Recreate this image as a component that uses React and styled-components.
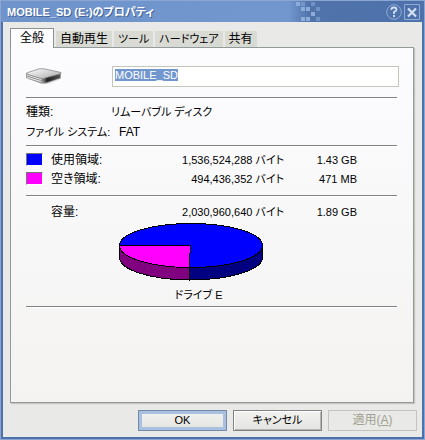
import React, { useEffect, useRef } from 'react';
import styled, { createGlobalStyle } from 'styled-components';

const GlobalStyle = createGlobalStyle`
  * {
    box-sizing: border-box;
  }

  body {
    margin: 0;
    color: #000;
    font-family: 'Liberation Sans', 'Noto Sans CJK JP', sans-serif;
    font-size: 12px;
    line-height: 16px;
    font-feature-settings: 'palt';
  }

  button,
  input {
    font: inherit;
    font-feature-settings: inherit;
  }
`;

const Dialog = styled.main`
  display: flex;
  flex-direction: column;
  min-height: 100vh;
  padding: 0 2px 2px;
  border: 1px solid #8ba6d3;
  background: #4d71ab;
`;

const TitleBar = styled.header`
  display: flex;
  align-items: center;
  height: 21px;
  margin: 0 -2px;
  padding: 0 4px 0 6px;
  background: linear-gradient(90deg, #6f93cb, #7296ce 68%, #5073aa 73%, #4d71ab);
`;

const Title = styled.h1`
  margin: 0;
  color: #fff;
  font-size: 11px;
  font-weight: 700;
  line-height: 20px;
  text-shadow: 1px 1px 0 #42639b;
  white-space: nowrap;
`;

const Mosaic = styled.svg`
  flex: none;
  margin-left: auto;
  margin-right: 64px;
`;

const TitleButton = styled.button`
  flex: none;
  display: flex;
  width: 16px;
  height: 16px;
  margin-left: 2px;
  padding: 0;
  border: 0;
  background: none;
`;

const Body = styled.div`
  flex: 1;
  display: flex;
  flex-direction: column;
  padding: 6px 5px 6px 7px;
  background: #e9e9e7;
`;

const TabList = styled.div`
  display: flex;
  align-items: flex-end;
  gap: 2px;
`;

const Tab = styled.button`
  height: ${(props) => (props.$active ? '20px' : '16px')};
  margin-bottom: ${(props) => (props.$active ? '-1px' : '0')};
  padding: 0 ${(props) => (props.$active ? 9 : props.$kana ? 4 : 4)}px;
  border: solid #8d9191;
  border-width: ${(props) => (props.$active ? '1px 1px 0' : '0')};
  border-radius: 1px 1px 0 0;
  background: ${(props) => (props.$active ? '#fcfcff' : '#d9dad4')};
  font-size: ${(props) => (props.$kana ? 11 : 12)}px;
  line-height: 15px;
  white-space: nowrap;
  z-index: 1;
`;

const Panel = styled.section`
  flex: 1;
  display: flex;
  flex-direction: column;
  margin-right: 3px;
  padding: 18px 14px 0 15px;
  border: 1px solid #919b9c;
  background: linear-gradient(#fcfcff, #f4f3f1);
  box-shadow: 1px 1px 1px #c5c5bb;
`;

const NameRow = styled.div`
  display: grid;
  grid-template-columns: 86px 1fr;
  align-items: center;
  height: 21px;
`;

const NameInput = styled.input`
  width: 100%;
  height: 21px;
  padding: 0 2px 3px;
  border: 1px solid #c5c6ba;
  outline: 0;
  background: #fff;
  color: #000;
  font-size: 11px;

  &::selection {
    background: #7296ce;
    color: #fff;
  }
`;

const Rule = styled.hr`
  width: calc(100% - 2px);
  height: 2px;
  margin: ${(props) => props.$top}px 0 ${(props) => props.$bottom}px;
  border: 0;
  border-top: 1px solid #828282;
  background: #fff;
`;

const Facts = styled.dl`
  display: flex;
  flex-direction: column;
  gap: 4px;
  margin: 0;
`;

const Fact = styled.div`
  display: flex;

  dt {
    width: ${(props) => props.$labelWidth}px;
    font-size: ${(props) => (props.$kana ? 11 : 12)}px;
    white-space: nowrap;
  }

  dd {
    margin: 0;
    font-size: ${(props) => (props.$kana ? 12 : 11)}px;
  }
`;

const Usage = styled.table`
  width: 331px;
  max-width: 100%;
  border-collapse: collapse;
  table-layout: fixed;

  th,
  td {
    height: 19px;
    padding: 0;
    font-weight: 400;
    white-space: nowrap;
  }

  th {
    width: 110px;
    text-align: left;
  }

  td {
    font-size: 11px;
    text-align: right;
  }

  td:last-child {
    width: 73px;
  }
`;

const Label = styled.span`
  display: flex;
  align-items: center;
  gap: 8px;
  padding-left: ${(props) => (props.$indent ? 25 : 0)}px;
`;

const Swatch = styled.span`
  width: 17px;
  height: 13px;
  border: 1px solid;
  border-color: #777 #fff #fff #777;
  background: ${(props) => props.$color};
`;

const Chart = styled.figure`
  display: flex;
  flex-direction: column;
  align-items: center;
  margin: 2px 0 0;
  padding-right: 42px;

  figcaption {
    margin: 5px 0 0 14px;
    font-size: 11px;
  }
`;

const Actions = styled.footer`
  display: flex;
  justify-content: flex-end;
  gap: 6px;
  margin-top: 7px;
`;

const Button = styled.button`
  width: 89px;
  height: 21px;
  padding: 0;
  border: 1px solid ${(props) => (props.$primary ? '#7389a8' : '#838383')};
  background: linear-gradient(#f2f2f0, #e4e4e1);
  box-shadow: ${(props) => (props.$primary ? 'inset 0 0 0 3px #a9c1df' : 'inset 1px 1px #fff, inset -1px -1px #b5b5b2')};
  font-size: ${(props) => (props.disabled ? 12 : 11)}px;
  line-height: 17px;

  &:disabled {
    border-color: #c3c4bf;
    background: #e9e9e7;
    box-shadow: none;
    color: #a1a192;
  }
`;

const tabs = [
  { name: '全般' },
  { name: '自動再生' },
  { name: 'ツール', kana: true },
  { name: 'ハードウェア', kana: true },
  { name: '共有' },
];

const TitleMosaic = () => (
  <Mosaic width="25" height="21" viewBox="0 0 25 21" fill="#8dabdb" aria-hidden="true">
    <path d="M1 1h4v4H1ZM6 6h4v4H6ZM11 6h4v4h-4ZM16 11h4v4h-4ZM6 16h4v4H6ZM11 16h4v4h-4Z" />
    <path d="M6 1h4v4H6ZM16 1h4v4h-4ZM21 6h4v4h-4ZM21 16h4v4h-4Z" opacity="0.55" />
  </Mosaic>
);

const HelpIcon = () => (
  <svg width="16" height="16" viewBox="0 0 16 16" fill="none" aria-hidden="true">
    <circle cx="8" cy="8" r="7.3" stroke="#91abd6" />
    <path d="M5.5 6V4.5Q6 3.5 8 3.5q2.500 0 2.500 2Q10.500 7 8 8v2M8 11v2" stroke="#d5e0f2" strokeWidth="1.800" />
  </svg>
);

const CloseIcon = () => (
  <svg width="16" height="16" viewBox="0 0 16 16" fill="none" aria-hidden="true">
    <path d="M.5.5h15v15H.5Z" stroke="#91abd6" />
    <path d="m4 4.500 8 8m0-8-8 8" stroke="#d5e0f2" strokeWidth="2.200" />
  </svg>
);

const DriveIcon = () => (
  <svg width="37" height="17" viewBox="0 0 37 17" aria-hidden="true">
    <defs>
      <linearGradient id="drive-top" x1="0" y1="0" x2="1" y2="1">
        <stop offset="0" stopColor="#fff" />
        <stop offset="1" stopColor="#a8a8a8" />
      </linearGradient>
      <linearGradient id="drive-front" x1="0" y1="0" x2="1" y2="0">
        <stop offset="0" stopColor="#999" />
        <stop offset="0.3" stopColor="#222" />
        <stop offset="1" stopColor="#555" />
      </linearGradient>
    </defs>
    <path d="M2 11 17 16h5l13-5v-2L18 13 3 9Z" fill="#ccc" opacity="0.7" />
    <path d="M0 5v5l15 5.500h5L35 10V5L18 9Z" fill="#9a9a9a" />
    <path d="M1 6.500 15 11v3L1 9.500Z" fill="#eee" />
    <path d="M1 8 15 12.500" stroke="#888" />
    <path d="M16 10.500 34 6v4l-14 4.500h-4Z" fill="url(#drive-front)" />
    <path d="M.5 5 13 .8h5L35 4.500v1L17 10.500h-2L.5 6Z" fill="url(#drive-top)" stroke="#8a8a8a" strokeWidth="0.8" />
  </svg>
);

const PieChart = () => (
  <svg
    width="145"
    height="59"
    viewBox="0 0 145 59"
    role="img"
    aria-label="使用領域と空き領域"
    stroke="#000"
    shapeRendering="crispEdges"
  >
    <path d="M.5 22.500v12a71.500 22.500 0 0 0 70 22.500V22.500Z" fill="#800080" />
    <path d="M70.500 57a73 22.500 0 0 0 73-22.500v-12h-73Z" fill="#000080" />
    <ellipse cx="72" cy="22.500" rx="71.500" ry="22" fill="#00f" />
    <path d="M.5 22.500h71L70 44.500A71.500 22 0 0 1 .5 22.500Z" fill="#f0f" />
  </svg>
);

const App = () => {
  const nameRef = useRef(null);

  useEffect(() => {
    nameRef.current.focus();
    nameRef.current.select();
  }, []);

  return (
    <Dialog>
      <GlobalStyle />
      <TitleBar>
        <Title>MOBILE_SD (E:)のプロパティ</Title>
        <TitleMosaic />
        <TitleButton aria-label="ヘルプ">
          <HelpIcon />
        </TitleButton>
        <TitleButton aria-label="閉じる">
          <CloseIcon />
        </TitleButton>
      </TitleBar>
      <Body>
        <TabList role="tablist">
          {tabs.map((tab, i) => (
            <Tab key={tab.name} role="tab" aria-selected={i === 0} $active={i === 0} $kana={tab.kana}>
              {tab.name}
            </Tab>
          ))}
        </TabList>
        <Panel role="tabpanel">
          <NameRow>
            <DriveIcon />
            <NameInput ref={nameRef} aria-label="ボリューム名" defaultValue="MOBILE_SD" />
          </NameRow>
          <Rule $top={10} $bottom={5} />
          <Facts>
            <Fact $labelWidth={85}>
              <dt>種類:</dt>
              <dd>リムーバブル ディスク</dd>
            </Fact>
            <Fact $labelWidth={93} $kana>
              <dt>ファイル システム:</dt>
              <dd>FAT</dd>
            </Fact>
          </Facts>
          <Rule $top={5} $bottom={3} />
          <Usage>
            <tbody>
              <tr>
                <th scope="row">
                  <Label>
                    <Swatch $color="#00f" />
                    使用領域:
                  </Label>
                </th>
                <td>1,536,524,288 バイト</td>
                <td>1.43 GB</td>
              </tr>
              <tr>
                <th scope="row">
                  <Label>
                    <Swatch $color="#f0f" />
                    空き領域:
                  </Label>
                </th>
                <td>494,436,352 バイト</td>
                <td>471 MB</td>
              </tr>
            </tbody>
          </Usage>
          <Rule $top={7} $bottom={5} />
          <Usage>
            <tbody>
              <tr>
                <th scope="row">
                  <Label $indent>容量:</Label>
                </th>
                <td>2,030,960,640 バイト</td>
                <td>1.89 GB</td>
              </tr>
            </tbody>
          </Usage>
          <Chart>
            <PieChart />
            <figcaption>ドライブ E</figcaption>
          </Chart>
          <Rule $top={3} $bottom={0} />
        </Panel>
        <Actions>
          <Button $primary>OK</Button>
          <Button>キャンセル</Button>
          <Button disabled>
            適用(<u>A</u>)
          </Button>
        </Actions>
      </Body>
    </Dialog>
  );
};

export default App;
